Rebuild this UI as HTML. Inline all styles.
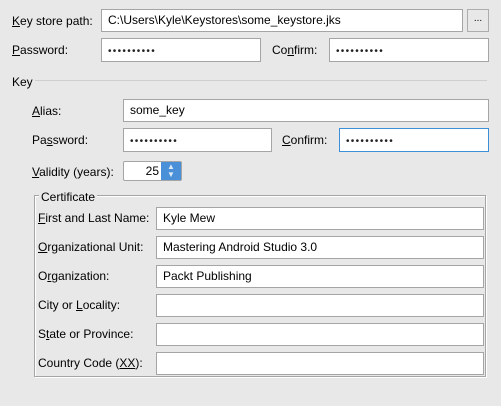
<!DOCTYPE html>
<html><head><style>
body{margin:0;width:501px;height:406px;background:#e8e8e8;font-family:"Liberation Sans",sans-serif;font-size:12px;color:#000;position:relative;overflow:hidden}
.l{position:absolute;white-space:nowrap;line-height:14px}
.f{position:absolute;box-sizing:border-box;background:#fff;border:1px solid #a5a5a5;padding-left:6px;line-height:20px;white-space:nowrap;overflow:hidden}
.pw span{position:relative;top:1px;font-size:10px;letter-spacing:1.3px;color:#222}
u{text-decoration:underline}
</style></head><body>
<div class="l" style="left:12px;top:14px"><u>K</u>ey store path:</div>
<div class="f" style="left:101px;top:9px;width:362px;height:23px">C:\Users\Kyle\Keystores\some_keystore.jks</div>
<div class="f" style="left:467px;top:9px;width:22px;height:23px;background:#e8e8e8;border-color:#adadad;padding:0;text-align:center;line-height:18px;font-size:10px">...</div>

<div class="l" style="left:12px;top:43px"><u>P</u>assword:</div>
<div class="f pw" style="left:101px;top:38px;width:160px;height:24px"><span>••••••••••</span></div>
<div class="l" style="left:272px;top:43px">Co<u>n</u>firm:</div>
<div class="f pw" style="left:329px;top:38px;width:160px;height:24px"><span>••••••••••</span></div>

<div class="l" style="left:12px;top:75px">Key</div>
<div style="position:absolute;left:35px;top:80px;height:1px;background:#cfcfcf;width:452px"></div>

<div class="l" style="left:32px;top:104px"><u>A</u>lias:</div>
<div class="f" style="left:123px;top:99px;width:366px;height:23px">some_key</div>
<div class="l" style="left:32px;top:133px">Pa<u>s</u>sword:</div>
<div class="f pw" style="left:123px;top:128px;width:149px;height:24px"><span>••••••••••</span></div>
<div class="l" style="left:282px;top:133px"><u>C</u>onfirm:</div>
<div class="f pw" style="left:339px;top:128px;width:150px;height:24px;border-color:#3d8fd8"><span>••••••••••</span></div>

<div class="l" style="left:32px;top:165px"><u>V</u>alidity (years):</div>
<div class="f" style="left:123px;top:161px;width:59px;height:20px;line-height:18px;padding:0 22px 0 0;text-align:right;border-radius:2px">25</div>
<div style="position:absolute;left:161px;top:162px;width:20px;height:18px;background:#4a90d9;color:#dfe9f5;font-size:8px;line-height:8px;text-align:center"><div style="margin-top:1px">▲</div><div>▼</div></div>

<div style="position:absolute;left:34px;top:195px;width:452px;height:182px;box-sizing:border-box;border:1px solid #a5a5a5;box-shadow:1px 1px 0 #fff inset, 1px 1px 0 #fff"></div>
<div class="l" style="left:39px;top:190px;background:#e8e8e8;padding:0 2px">Certificate</div>

<div class="l" style="left:38px;top:211px"><u>F</u>irst and Last Name:</div>
<div class="f" style="left:156px;top:207px;width:328px;height:23px">Kyle Mew</div>
<div class="l" style="left:38px;top:240px"><u>O</u>rganizational Unit:</div>
<div class="f" style="left:156px;top:236px;width:328px;height:23px">Mastering Android Studio 3.0</div>
<div class="l" style="left:38px;top:269px">O<u>r</u>ganization:</div>
<div class="f" style="left:156px;top:265px;width:328px;height:23px">Packt Publishing</div>
<div class="l" style="left:38px;top:298px">City or <u>L</u>ocality:</div>
<div class="f" style="left:156px;top:294px;width:328px;height:23px"></div>
<div class="l" style="left:38px;top:327px">S<u>t</u>ate or Province:</div>
<div class="f" style="left:156px;top:323px;width:328px;height:23px"></div>
<div class="l" style="left:38px;top:356px">Country Code (<u>XX</u>):</div>
<div class="f" style="left:156px;top:352px;width:328px;height:23px"></div>
</body></html>
